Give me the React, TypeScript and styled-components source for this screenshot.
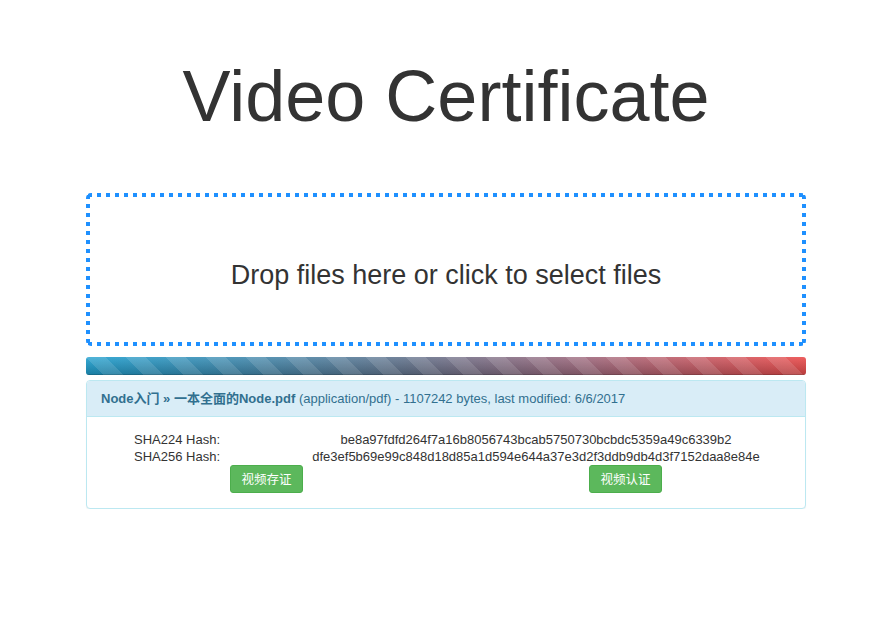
import React from "react";
import styled, { createGlobalStyle } from "styled-components";

const Global = createGlobalStyle`
  html, body { margin: 0; padding: 0; background: #fff; }
  body {
    font-family: "Liberation Sans", Arial, "Noto Sans CJK SC", sans-serif;
    font-size: 14px;
    line-height: 1.42857;
    color: #333;
  }
  * { box-sizing: border-box; }
`;

const Container = styled.div`
  width: 750px;
  margin: 0 auto;
  padding: 0 15px;
`;

const Title = styled.h1`
  margin: 57px 0 57px;
  font-size: 72px;
  font-weight: 400;
  line-height: 1.1;
  text-align: center;
  color: #333;
`;

const dots = "#1e90ff 0 4px, transparent 4px 9px";

const DropZone = styled.div`
  height: 153px;
  border-radius: 5px;
  background:
    repeating-linear-gradient(to right, ${dots}) left 2px top 0 / calc(100% - 4px) 4px no-repeat,
    repeating-linear-gradient(to right, ${dots}) left 2px bottom 0 / calc(100% - 4px) 4px no-repeat,
    repeating-linear-gradient(to bottom, ${dots}) left 0 top 2px / 4px calc(100% - 4px) no-repeat,
    repeating-linear-gradient(to bottom, ${dots}) right 0 top 2px / 4px calc(100% - 4px) no-repeat,
    #fff;
  display: flex;
  align-items: center;
  justify-content: center;
  padding-top: 12px;
  font-size: 27px;
  color: #333;
  cursor: pointer;
`;

const Progress = styled.div`
  margin-top: 11px;
  height: 18px;
  border-radius: 3px;
  overflow: hidden;
  background-color: #f5f5f5;
`;

const Bar = styled.div`
  height: 100%;
  background-image:
    linear-gradient(45deg, rgba(255,255,255,.12) 25%, transparent 25%, transparent 50%, rgba(255,255,255,.12) 50%, rgba(255,255,255,.12) 75%, transparent 75%, transparent),
    linear-gradient(to bottom, rgba(255,255,255,.1) 0%, rgba(0,0,0,.22) 100%),
    linear-gradient(to right, #1fa0d0 0%, #66758e 45%, #a26a7e 70%, #ec4d4d 100%);
  background-size: 40px 40px, 100% 100%, 100% 100%;
  box-shadow: inset 0 -1px 0 rgba(0,0,0,.15);
`;

const Panel = styled.div`
  margin-top: 5px;
  border: 1px solid #bce8f1;
  border-radius: 4px;
  background: #fff;
  box-shadow: 0 1px 1px rgba(0,0,0,.05);
`;

const PanelHeading = styled.div`
  padding: 10px 14px;
  background: #d9edf7;
  border-bottom: 1px solid #bce8f1;
  border-radius: 3px 3px 0 0;
  color: #31708f;
`;

const PanelTitle = styled.div`
  font-size: 13px;
  line-height: 1.1;
  padding-top: 1px;
`;

const Strong = styled.strong`
  font-weight: 700;
`;

const PanelBody = styled.div`
  padding: 14px 15px 15px;
`;

const HashTable = styled.div`
  margin: 0 -15px;
  display: grid;
  grid-template-columns: 180px 1fr;
  font-size: 13px;
  line-height: 17px;
  color: #333;
`;

const Cell = styled.div`
  text-align: center;
`;

const ButtonRow = styled.div`
  margin: 0 -15px;
  display: grid;
  grid-template-columns: 1fr 1fr;
  justify-items: center;
`;

const Button = styled.button`
  font-family: "Noto Sans CJK SC", "Liberation Sans", sans-serif;
  font-size: 12.5px;
  line-height: 18px;
  padding: 4px 10px;
  color: #fff;
  background: #5cb85c;
  border: 1px solid #4cae4c;
  border-radius: 3px;
  cursor: pointer;
`;

export default function App() {
  return (
    <>
      <Global />
      <Container>
        <Title>Video Certificate</Title>
        <DropZone>Drop files here or click to select files</DropZone>
        <Progress>
          <Bar style={{ width: "100%" }} />
        </Progress>
        <Panel>
          <PanelHeading>
            <PanelTitle>
              <Strong>Node入门 » 一本全面的Node.pdf</Strong> (application/pdf) - 1107242 bytes, last modified: 6/6/2017
            </PanelTitle>
          </PanelHeading>
          <PanelBody>
            <HashTable>
              <Cell>SHA224 Hash:</Cell>
              <Cell>be8a97fdfd264f7a16b8056743bcab5750730bcbdc5359a49c6339b2</Cell>
              <Cell>SHA256 Hash:</Cell>
              <Cell>dfe3ef5b69e99c848d18d85a1d594e644a37e3d2f3ddb9db4d3f7152daa8e84e</Cell>
            </HashTable>
            <ButtonRow>
              <Button>视频存证</Button>
              <Button>视频认证</Button>
            </ButtonRow>
          </PanelBody>
        </Panel>
      </Container>
    </>
  );
}
